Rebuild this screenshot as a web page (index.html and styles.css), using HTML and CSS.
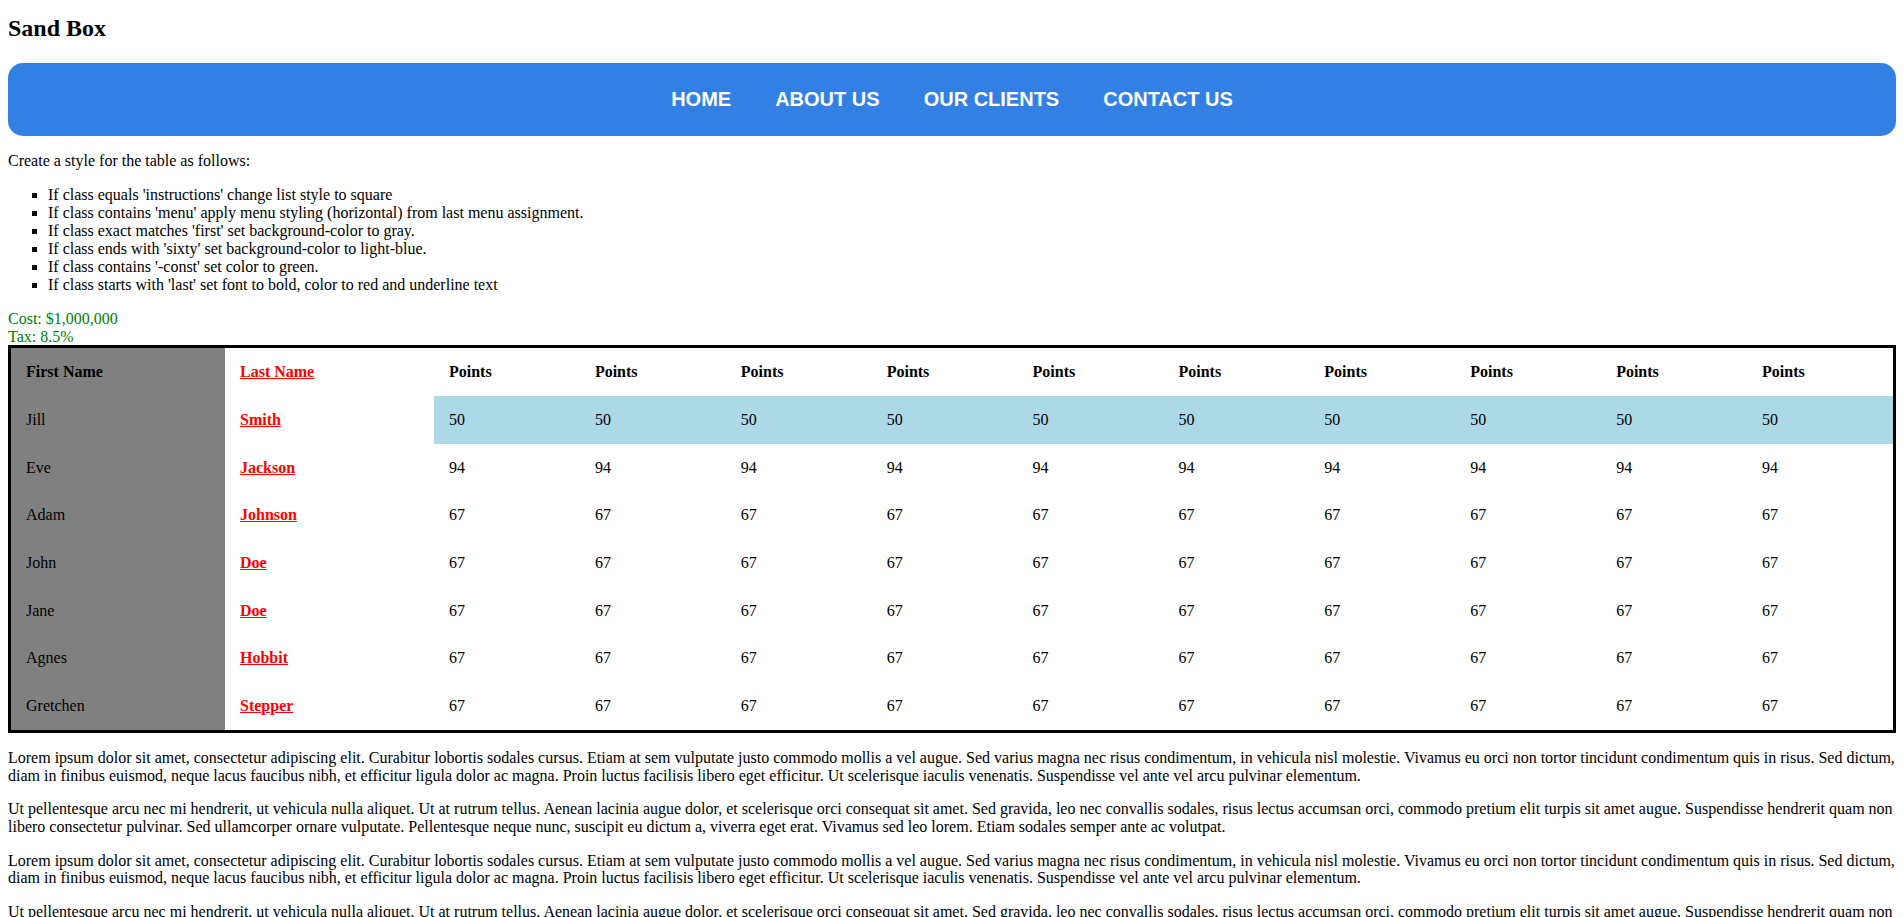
FILE: index.html
```html
<!DOCTYPE html>
<html lang="en">
<head>
<meta charset="utf-8">
<title>Sand Box</title>
<link rel="stylesheet" href="styles.css">
</head>
<body>
<h2 class="title">Sand Box</h2>
<nav class="menu-bar">
  <ul class="main-menu">
    <li><a href="#">Home</a></li>
    <li><a href="#">About Us</a></li>
    <li><a href="#">Our Clients</a></li>
    <li><a href="#">Contact Us</a></li>
  </ul>
</nav>
<p>Create a style for the table as follows:</p>
<ul class="instructions">
  <li>If class equals 'instructions' change list style to square</li>
  <li>If class contains 'menu' apply menu styling (horizontal) from last menu assignment.</li>
  <li>If class exact matches 'first' set background-color to gray.</li>
  <li>If class ends with 'sixty' set background-color to light-blue.</li>
  <li>If class contains '-const' set color to green.</li>
  <li>If class starts with 'last' set font to bold, color to red and underline text</li>
</ul>
<div class="cost-const">Cost: $1,000,000</div>
<div class="tax-const">Tax: 8.5%</div>
<table class="scores">
  <thead>
    <tr>
      <th class="first">First Name</th>
      <th class="lastname">Last Name</th>
      <th>Points</th><th>Points</th><th>Points</th><th>Points</th><th>Points</th>
      <th>Points</th><th>Points</th><th>Points</th><th>Points</th><th>Points</th>
    </tr>
  </thead>
  <tbody>
    <tr>
      <td class="first">Jill</td><td class="lastname">Smith</td>
      <td class="points-sixty">50</td><td class="points-sixty">50</td><td class="points-sixty">50</td><td class="points-sixty">50</td><td class="points-sixty">50</td>
      <td class="points-sixty">50</td><td class="points-sixty">50</td><td class="points-sixty">50</td><td class="points-sixty">50</td><td class="points-sixty">50</td>
    </tr>
    <tr>
      <td class="first">Eve</td><td class="lastname">Jackson</td>
      <td>94</td><td>94</td><td>94</td><td>94</td><td>94</td><td>94</td><td>94</td><td>94</td><td>94</td><td>94</td>
    </tr>
    <tr>
      <td class="first">Adam</td><td class="lastname">Johnson</td>
      <td>67</td><td>67</td><td>67</td><td>67</td><td>67</td><td>67</td><td>67</td><td>67</td><td>67</td><td>67</td>
    </tr>
    <tr>
      <td class="first">John</td><td class="lastname">Doe</td>
      <td>67</td><td>67</td><td>67</td><td>67</td><td>67</td><td>67</td><td>67</td><td>67</td><td>67</td><td>67</td>
    </tr>
    <tr>
      <td class="first">Jane</td><td class="lastname">Doe</td>
      <td>67</td><td>67</td><td>67</td><td>67</td><td>67</td><td>67</td><td>67</td><td>67</td><td>67</td><td>67</td>
    </tr>
    <tr>
      <td class="first">Agnes</td><td class="lastname">Hobbit</td>
      <td>67</td><td>67</td><td>67</td><td>67</td><td>67</td><td>67</td><td>67</td><td>67</td><td>67</td><td>67</td>
    </tr>
    <tr>
      <td class="first">Gretchen</td><td class="lastname">Stepper</td>
      <td>67</td><td>67</td><td>67</td><td>67</td><td>67</td><td>67</td><td>67</td><td>67</td><td>67</td><td>67</td>
    </tr>
  </tbody>
</table>
<p>Lorem ipsum dolor sit amet, consectetur adipiscing elit. Curabitur lobortis sodales cursus. Etiam at sem vulputate justo commodo mollis a vel augue. Sed varius magna nec risus condimentum, in vehicula nisl molestie. Vivamus eu orci non tortor tincidunt condimentum quis in risus. Sed dictum, diam in finibus euismod, neque lacus faucibus nibh, et efficitur ligula dolor ac magna. Proin luctus facilisis libero eget efficitur. Ut scelerisque iaculis venenatis. Suspendisse vel ante vel arcu pulvinar elementum.</p>
<p>Ut pellentesque arcu nec mi hendrerit, ut vehicula nulla aliquet. Ut at rutrum tellus. Aenean lacinia augue dolor, et scelerisque orci consequat sit amet. Sed gravida, leo nec convallis sodales, risus lectus accumsan orci, commodo pretium elit turpis sit amet augue. Suspendisse hendrerit quam non libero consectetur pulvinar. Sed ullamcorper ornare vulputate. Pellentesque neque nunc, suscipit eu dictum a, viverra eget erat. Vivamus sed leo lorem. Etiam sodales semper ante ac volutpat.</p>
<p>Lorem ipsum dolor sit amet, consectetur adipiscing elit. Curabitur lobortis sodales cursus. Etiam at sem vulputate justo commodo mollis a vel augue. Sed varius magna nec risus condimentum, in vehicula nisl molestie. Vivamus eu orci non tortor tincidunt condimentum quis in risus. Sed dictum, diam in finibus euismod, neque lacus faucibus nibh, et efficitur ligula dolor ac magna. Proin luctus facilisis libero eget efficitur. Ut scelerisque iaculis venenatis. Suspendisse vel ante vel arcu pulvinar elementum.</p>
<p>Ut pellentesque arcu nec mi hendrerit, ut vehicula nulla aliquet. Ut at rutrum tellus. Aenean lacinia augue dolor, et scelerisque orci consequat sit amet. Sed gravida, leo nec convallis sodales, risus lectus accumsan orci, commodo pretium elit turpis sit amet augue. Suspendisse hendrerit quam non libero consectetur pulvinar. Sed ullamcorper ornare vulputate. Pellentesque neque nunc, suscipit eu dictum a, viverra eget erat. Vivamus sed leo lorem. Etiam sodales semper ante ac volutpat.</p>
</body>
</html>
```
FILE: styles.css
```css
body {
  margin: 0;
  padding: 8px;
  font-family: "Liberation Serif", "Times New Roman", serif;
  font-size: 16px;
  line-height: 17.7px;
  color: #000;
  background: #fff;
}

.title {
  font-size: 24px;
  line-height: 26.6px;
  font-weight: bold;
  margin: 7px 0 21.5px;
}

.main-menu {
  list-style: none;
  margin: 0;
  padding: 25px 0;
  background: #3380e5;
  border-radius: 15px;
  display: flex;
  justify-content: center;
  gap: 44px;
}

.main-menu a {
  display: block;
  font-family: "Liberation Sans", Arial, sans-serif;
  font-weight: bold;
  font-size: 20px;
  line-height: 23px;
  color: #fff;
  text-decoration: none;
  text-transform: uppercase;
}

p {
  margin: 16px 0;
}

.instructions {
  list-style: square;
  margin: 16px 0;
  padding-left: 40px;
}

.instructions li {
  line-height: 18px;
}

.cost-const,
.tax-const {
  color: #008000;
}

.scores {
  width: 100%;
  border: 3px solid #000;
  border-collapse: separate;
  border-spacing: 0;
  table-layout: fixed;
}

.scores th,
.scores td {
  box-sizing: border-box;
  padding: 15px;
  text-align: left;
  line-height: 17.7px;
}

.scores th {
  font-weight: bold;
}

.scores th.first {
  width: 214px;
}

.scores th.lastname {
  width: 209px;
}

.first {
  background-color: #808080;
}

.lastname {
  font-weight: bold;
  color: #ff0000;
  text-decoration: underline;
}

.points-sixty {
  background-color: #add8e6;
}
```
